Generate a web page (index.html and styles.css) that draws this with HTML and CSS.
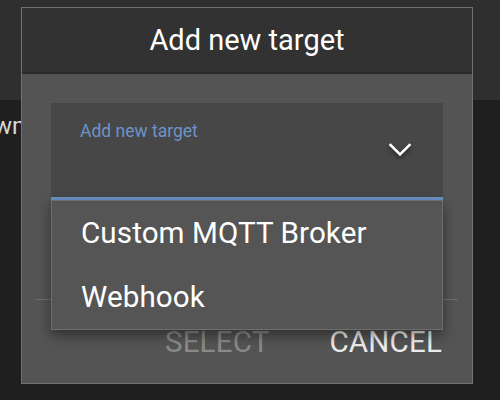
FILE: index.html
```html
<!DOCTYPE html>
<html>
<head>
<meta charset="utf-8">
<link rel="stylesheet" href="styles.css">
</head>
<body>
<div class="page">
  <div class="topband"></div>
  <div class="bgtext">wm</div>
</div>
<div class="dialog">
  <div class="dialog-header">Add new target</div>
  <div class="dialog-body">
    <div class="select-wrap">
      <div class="select-field">
        <div class="select-label">Add new target</div>
        <svg class="chevron" width="24" height="16" viewBox="0 0 24 16"><polyline points="2.5,3 12,12.5 21.5,3" fill="none" stroke="#fff" stroke-width="2.6" stroke-linecap="square"/></svg>
      </div>
      <div class="menu">
        <div class="menu-item">Custom MQTT Broker</div>
        <div class="menu-item">Webhook</div>
      </div>
    </div>
    <div class="divider"></div>
    <div class="actions">
      <div class="btn btn-disabled">SELECT</div>
      <div class="btn">CANCEL</div>
    </div>
  </div>
</div>
</body>
</html>
```

FILE: styles.css
```css
html, body {
  margin: 0;
  padding: 0;
}
body {
  width: 500px;
  height: 400px;
  overflow: hidden;
  background: #1f1f1f;
  font-family: Roboto, "Liberation Sans", sans-serif;
  position: relative;
}
.topband {
  height: 100px;
  background: #2f2f2f;
}
.bgtext {
  margin-top: 12px;
  margin-left: -6px;
  font-size: 24px;
  line-height: 28px;
  color: #d8d8d8;
}
.dialog {
  position: absolute;
  left: 21px;
  top: 7px;
  width: 452px;
  height: 377px;
  box-sizing: border-box;
  border: 1px solid #727272;
  background: #545454;
  display: flex;
  flex-direction: column;
}
.dialog-header {
  height: 64px;
  background: #323232;
  border-bottom: 2px solid #2a2a2a;
  color: #fff;
  font-size: 29px;
  font-weight: 400;
  text-align: center;
  line-height: 64px;
  flex: none;
}
.dialog-body {
  flex: 1;
  padding: 29px 0 0 0;
  display: flex;
  flex-direction: column;
}
.select-wrap {
  position: relative;
  margin: 0 29px;
}
.select-field {
  height: 94px;
  box-sizing: content-box;
  background: #474747;
  border-bottom: 3px solid #6d93c9;
  padding: 0 31px 0 29px;
  display: flex;
  align-items: flex-start;
}
.select-label {
  flex: 1;
  margin-top: 18px;
  font-size: 17.5px;
  line-height: 20px;
  color: #6d93c9;
}
.chevron {
  margin-top: 39px;
  filter: drop-shadow(0 2px 2px rgba(0,0,0,0.55));
}
.menu {
  position: absolute;
  left: 0;
  right: 0;
  top: 100%;
  background: #555555;
  border: 1px solid #6e6e6e;
  box-shadow: 0 5px 12px rgba(0,0,0,0.45);
  z-index: 2;
}
.menu-item {
  height: 64px;
  line-height: 64px;
  padding-left: 29px;
  font-size: 29.6px;
  letter-spacing: 0.1px;
  color: #fff;
}
.divider {
  margin: 99px 14px 0 14px;
  height: 1px;
  background: #6e6e6e;
}
.actions {
  margin-top: 22px;
  display: flex;
  justify-content: flex-end;
  gap: 60px;
  padding-right: 30px;
}
.btn {
  font-size: 29.5px;
  letter-spacing: 0.2px;
  line-height: 40px;
  color: #ececec;
}
.btn-disabled {
  color: #8a8a8a;
}
```
